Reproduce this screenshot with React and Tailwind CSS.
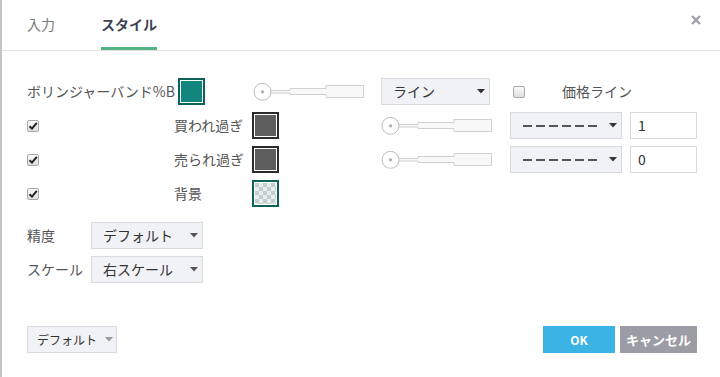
import React from 'react';

const font = { fontFamily: '"Noto Sans CJK JP", "Noto Sans", sans-serif' };

const Caret = ({ className = 'text-[#333]' }) => (
  <svg width="8" height="5" viewBox="0 0 8 5" className={className}>
    <path d="M0 0 H8 L4 4.5 Z" fill="currentColor" />
  </svg>
);

const Check = ({ checked }) => (
  <div className="w-[12px] h-[12px] rounded-[2px] border border-[#a8a8a8] bg-gradient-to-b from-[#fbfbfb] to-[#dedede] flex items-center justify-center">
    {checked && (
      <svg width="10" height="10" viewBox="0 0 10 10">
        <path d="M1.5 5.2 L4 7.6 L8.8 1.8" fill="none" stroke="#222" strokeWidth="2" />
      </svg>
    )}
  </div>
);

const Swatch = ({ kind }) => {
  const border =
    kind === 'gray' ? 'border-[#2b2b2b]' : 'border-[#0d625c]';
  return (
    <div className={`w-[27px] h-[27px] border-2 ${border} bg-white p-[1px]`}>
      {kind === 'teal' && <div className="w-full h-full bg-[#13857f]" />}
      {kind === 'gray' && <div className="w-full h-full bg-[#5d5d5d]" />}
      {kind === 'check' && (
        <svg width="100%" height="100%">
          <defs>
            <pattern id="chk" width="8" height="8" patternUnits="userSpaceOnUse">
              <rect width="8" height="8" fill="#e9eeed" />
              <rect width="4" height="4" fill="#c2cecc" />
              <rect x="4" y="4" width="4" height="4" fill="#c2cecc" />
            </pattern>
          </defs>
          <rect width="100%" height="100%" fill="url(#chk)" />
        </svg>
      )}
    </div>
  );
};

const Slider = () => (
  <svg width="112" height="20" viewBox="0 0 112 20">
    <path
      d="M17 8.5 H37 V6.5 H73 V3.5 H110.5 V15.5 H73 V12.5 H37 V11 H17 Z"
      fill="#f8f8f8"
      stroke="#d0d0d0"
    />
    <circle cx="9.5" cy="9.8" r="8.5" fill="#fff" stroke="#bcbcc4" />
    <circle cx="9.5" cy="9.8" r="1.6" fill="#a9a9b0" />
  </svg>
);

const Select = ({ children, w, caretClass }) => (
  <div
    className={`${w} h-[27px] bg-[#f1f2f6] border border-[#d9dade] flex items-center justify-between pl-[11px] pr-[4px] text-[14px] text-[#333]`}
  >
    <span>{children}</span>
    <Caret className={caretClass} />
  </div>
);

const Dashes = () => (
  <svg width="75" height="4" viewBox="0 0 75 4">
    <line x1="0" y1="2" x2="75" y2="2" stroke="#555" strokeWidth="2" strokeDasharray="9 4" />
  </svg>
);

const LineRow = ({ label, value }) => (
  <div className="flex items-center h-[27px]">
    <div className="w-[147px]">
      <Check checked />
    </div>
    <div className="w-[78px] text-[14px] text-[#555]">{label}</div>
    <div className="w-[129px]">
      <Swatch kind="gray" />
    </div>
    <div className="w-[129px]">
      <Slider />
    </div>
    <div className="w-[112px] h-[27px] bg-[#f1f2f6] border border-[#d9dade] flex items-center justify-between pl-[12px] pr-[4px] mr-[8px]">
      <Dashes />
      <Caret />
    </div>
    <div className="w-[67px] h-[27px] border border-[#d9dade] flex items-center pl-[7px] text-[14px] text-[#333]">
      {value}
    </div>
  </div>
);

export default function App() {
  return (
    <div
      className="w-[720px] h-[377px] bg-white border-l-2 border-[#c4c4c4] flex flex-col overflow-hidden"
      style={font}
    >
      <div className="h-[51px] border-b border-[#e0e0e0] flex items-end justify-between pl-[25px] pr-[19px]">
        <div className="flex gap-[46px] text-[14px]">
          <div className="pb-[12px] pt-[2px] text-[#7a7a7a] border-b-2 border-transparent">入力</div>
          <div className="pb-[12px] pt-[2px] font-bold text-[#3e4452] border-b-[3px] border-[#55b487]">
            スタイル
          </div>
        </div>
        <svg width="10" height="10" viewBox="0 0 10 10" className="mb-[25px]">
          <path d="M1 1 L9 9 M9 1 L1 9" stroke="#9a9aa2" strokeWidth="2" />
        </svg>
      </div>

      <div className="pl-[25px] pt-[27px] flex flex-col gap-[7px]">
        <div className="flex items-center h-[27px]">
          <div className="w-[151px] text-[14px] text-[#555] whitespace-nowrap">ボリンジャーバンド%B</div>
          <div className="w-[75px]">
            <Swatch kind="teal" />
          </div>
          <div className="w-[128px]">
            <Slider />
          </div>
          <div className="mr-[23px]">
            <Select w="w-[109px]">ライン</Select>
          </div>
          <div className="w-[49px]">
            <Check />
          </div>
          <div className="text-[14px] text-[#555]">価格ライン</div>
        </div>
        <LineRow label="買われ過ぎ" value="1" />
        <LineRow label="売られ過ぎ" value="0" />
        <div className="flex items-center h-[27px]">
          <div className="w-[147px]">
            <Check checked />
          </div>
          <div className="w-[78px] text-[14px] text-[#555]">背景</div>
          <Swatch kind="check" />
        </div>

        <div className="flex items-center h-[27px] mt-[8px]">
          <div className="w-[64px] text-[14px] text-[#555]">精度</div>
          <Select w="w-[112px]" caretClass="text-[#555]">デフォルト</Select>
        </div>
        <div className="flex items-center h-[27px]">
          <div className="w-[64px] text-[14px] text-[#555]">スケール</div>
          <Select w="w-[112px]" caretClass="text-[#555]">右スケール</Select>
        </div>
      </div>

      <div className="mt-auto pb-[24px] pl-[25px] pr-[23px] flex items-center justify-between">
        <div className="w-[90px] h-[27px] bg-[#f1f2f6] border border-[#d9dade] flex items-center pl-[9px] gap-[8px] text-[12px] text-[#333]">
          <span>デフォルト</span>
          <Caret className="text-[#999]" />
        </div>
        <div className="flex gap-[5px]">
          <div className="w-[72px] h-[27px] bg-[#3bb3e4] text-white font-bold text-[12px] flex items-center justify-center">
            OK
          </div>
          <div className="w-[77px] h-[27px] bg-[#9b9ca4] text-white font-bold text-[13px] flex items-center justify-center">
            キャンセル
          </div>
        </div>
      </div>
    </div>
  );
}
